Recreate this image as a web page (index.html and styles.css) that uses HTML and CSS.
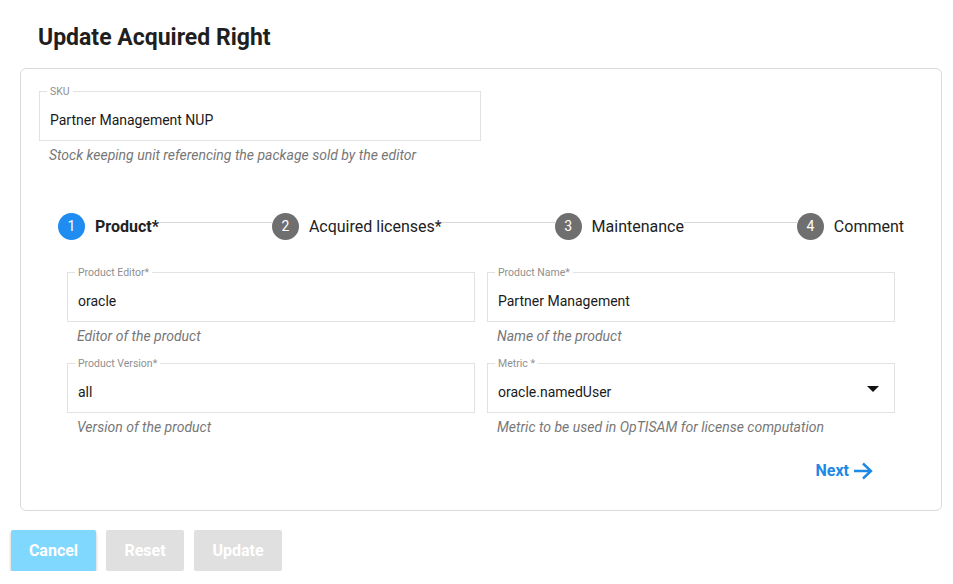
FILE: index.html
```html
<!DOCTYPE html>
<html>
<head>
<meta charset="utf-8">
<link rel="stylesheet" href="styles.css">
</head>
<body>
<div class="page">
  <h2 class="title">Update Acquired Right</h2>
  <div class="card">
    <div class="sku">
      <div class="field">
        <span class="flabel">SKU</span>
        <span class="fvalue">Partner Management NUP</span>
      </div>
      <div class="hint">Stock keeping unit referencing the package sold by the editor</div>
    </div>

    <div class="stepper">
      <div class="step active"><span class="dot">1</span><span class="slabel">Product*</span></div>
      <div class="line"></div>
      <div class="step"><span class="dot">2</span><span class="slabel">Acquired licenses*</span></div>
      <div class="line"></div>
      <div class="step"><span class="dot">3</span><span class="slabel">Maintenance</span></div>
      <div class="line"></div>
      <div class="step"><span class="dot">4</span><span class="slabel">Comment</span></div>
    </div>

    <div class="form">
      <div class="cell">
        <div class="field"><span class="flabel">Product Editor*</span><span class="fvalue">oracle</span></div>
        <div class="hint">Editor of the product</div>
      </div>
      <div class="cell">
        <div class="field"><span class="flabel">Product Name*</span><span class="fvalue">Partner Management</span></div>
        <div class="hint">Name of the product</div>
      </div>
      <div class="cell">
        <div class="field"><span class="flabel">Product Version*</span><span class="fvalue">all</span></div>
        <div class="hint">Version of the product</div>
      </div>
      <div class="cell">
        <div class="field select"><span class="flabel">Metric *</span><span class="fvalue">oracle.namedUser</span><span class="caret"></span></div>
        <div class="hint">Metric to be used in OpTISAM for license computation</div>
      </div>
    </div>

    <div class="next-row">
      <span class="next">Next
        <svg width="20" height="18" viewBox="0 0 20 18"><path d="M1 9 H18 M10 1.5 L18 9 L10 16.5" fill="none" stroke="#1e88e5" stroke-width="2.4"/></svg>
      </span>
    </div>
  </div>

  <div class="actions">
    <button class="btn cancel">Cancel</button>
    <button class="btn disabled reset">Reset</button>
    <button class="btn disabled update">Update</button>
  </div>
</div>
</body>
</html>
```

FILE: styles.css
```css
* { box-sizing: border-box; }
body {
  margin: 0;
  background: #fff;
  font-family: Roboto, "Liberation Sans", sans-serif;
  color: #212121;
}
.page {
  padding: 0 11px;
}
.title {
  margin: 0 0 15px 27px;
  padding-top: 23px;
  font-size: 23px;
  line-height: 30px;
  font-weight: 700;
  color: #1f1f1f;
}
.card {
  margin-left: 9px;
  width: 922px;
  height: 443px;
  border: 1px solid #dadada;
  border-radius: 6px;
  padding: 22px 18px 0 18px;
}
.sku {
  width: 442px;
}
.field {
  position: relative;
  height: 50px;
  border: 1px solid #e2e2e2;
  display: flex;
  align-items: center;
  padding: 7px 10px 0 10px;
}
.flabel {
  position: absolute;
  left: 7px;
  top: -7px;
  padding: 0 3px;
  background: #fff;
  font-size: 10.5px;
  line-height: 13px;
  color: #8f8f8f;
}
.fvalue {
  font-size: 14px;
  color: #1a1a1a;
}
.hint {
  margin-top: 5px;
  padding-left: 10px;
  font-size: 14px;
  line-height: 18px;
  font-style: italic;
  color: #777;
}
.stepper {
  margin: 49px 19px 0 19px;
  display: flex;
  align-items: center;
  height: 26px;
}
.step {
  display: flex;
  align-items: center;
}
.dot {
  width: 27px;
  height: 27px;
  border-radius: 50%;
  background: #6f6f6f;
  color: #fff;
  font-size: 14px;
  display: flex;
  align-items: center;
  justify-content: center;
  margin-right: 10px;
}
.step.active .dot {
  background: #1e8cf0;
}
.slabel {
  font-size: 16px;
  color: #222;
}
.step.active .slabel {
  font-weight: 700;
}
.line {
  flex: 1;
  height: 1px;
  background: #d8d8d8;
  margin-bottom: 8px;
}
.form {
  margin: 33px 28px 0 28px;
  display: grid;
  grid-template-columns: 408px 408px;
  column-gap: 12px;
}
.cell {
  height: 91px;
}
.select {
  padding-right: 15px;
}
.select .fvalue {
  flex: 1;
}
.caret {
  width: 0;
  height: 0;
  border-left: 6px solid transparent;
  border-right: 6px solid transparent;
  border-top: 6px solid #111;
  margin-bottom: 6px;
}
.next-row {
  display: flex;
  justify-content: flex-end;
  padding-right: 50px;
  margin-top: 7px;
}
.next {
  display: flex;
  align-items: center;
  gap: 4px;
  color: #1e88e5;
  font-weight: 700;
  font-size: 16px;
}
.actions {
  display: flex;
  gap: 10px;
  margin-top: 19px;
}
.btn {
  height: 41px;
  border: none;
  border-radius: 2px;
  color: #fff;
  font-family: Roboto, "Liberation Sans", sans-serif;
  font-weight: 700;
  font-size: 16px;
  padding: 0;
}
.cancel {
  width: 85px;
  background: #80d8ff;
  box-shadow: 0 2px 3px rgba(0,0,0,0.28);
}
.disabled {
  background: #e0e0e0;
}
.reset { width: 78px; }
.update { width: 88px; }
```
